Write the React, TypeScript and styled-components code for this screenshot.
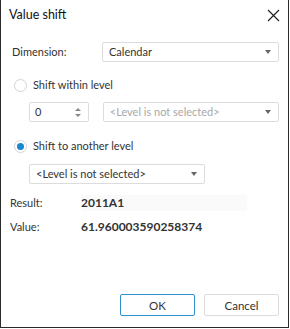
import React, { useState } from 'react';
import styled, { createGlobalStyle } from 'styled-components';

const GlobalStyle = createGlobalStyle`
  html, body {
    margin: 0;
    padding: 0;
    background: #fff;
  }
  body {
    font-family: Lato, "Noto Sans", Arial, sans-serif;
    font-size: 11px;
    line-height: 16px;
    color: #333;
  }
`;

const Dialog = styled.div`
  box-sizing: border-box;
  width: 289px;
  height: 328px;
  border: 1px solid #2b2b2b;
  border-top: none;
  display: flex;
  flex-direction: column;
  background: #fff;
`;

const TitleBar = styled.div`
  display: flex;
  align-items: center;
  justify-content: space-between;
  height: 30px;
  padding: 0 7px 0 8px;
`;

const Title = styled.div`
  font-size: 12.5px;
  color: #111;
`;

const CloseButton = styled.button`
  border: none;
  background: none;
  padding: 0;
  width: 16px;
  height: 16px;
  display: flex;
  align-items: center;
  justify-content: center;
`;

const Body = styled.div`
  flex: 1;
  display: flex;
  flex-direction: column;
  padding: 12px 9px 0 9px;
`;

const Row = styled.div<{ indent?: number; mt?: number }>`
  display: flex;
  align-items: center;
  margin-left: ${p => p.indent || 0}px;
  margin-top: ${p => p.mt || 0}px;
`;

const Label = styled.div<{ width: number; inset?: number }>`
  width: ${p => p.width}px;
  padding-left: ${p => p.inset || 0}px;
  box-sizing: border-box;
  flex-shrink: 0;
`;

const Combo = styled.div<{ width: number; disabled?: boolean }>`
  box-sizing: border-box;
  width: ${p => p.width}px;
  height: 20px;
  border: 1px solid #dcdcdc;
  border-radius: 2px;
  display: flex;
  align-items: center;
  justify-content: space-between;
  padding: 0 7px 0 6px;
  color: ${p => (p.disabled ? '#a8a8a8' : '#333')};
`;

const Arrow = styled.span`
  width: 0;
  height: 0;
  border-left: 3.5px solid transparent;
  border-right: 3.5px solid transparent;
  border-top: 4px solid #666;
`;

const Radio = styled.label`
  display: flex;
  align-items: center;
  gap: 6px;
  cursor: pointer;
`;

const RadioCircle = styled.span<{ checked: boolean }>`
  box-sizing: border-box;
  width: 13px;
  height: 13px;
  border-radius: 50%;
  border: 1px solid #d4d4d4;
  display: flex;
  align-items: center;
  justify-content: center;
  &::after {
    content: '';
    width: 7px;
    height: 7px;
    border-radius: 50%;
    background: ${p => (p.checked ? '#1a86d0' : 'transparent')};
  }
`;

const Spinner = styled.div`
  box-sizing: border-box;
  width: 60px;
  height: 20px;
  border: 1px solid #dcdcdc;
  border-radius: 2px;
  display: flex;
  align-items: center;
  justify-content: space-between;
  padding: 0 7px 0 5px;
  margin-right: 14px;
`;

const SpinArrows = styled.div`
  display: flex;
  flex-direction: column;
  gap: 3px;
`;

const SpinArrow = styled.span<{ up?: boolean }>`
  width: 0;
  height: 0;
  border-left: 3px solid transparent;
  border-right: 3px solid transparent;
  ${p => (p.up ? 'border-bottom: 3px solid #888;' : 'border-top: 3px solid #888;')}
`;

const InfoValue = styled.div<{ shaded?: boolean }>`
  font-weight: bold;
  font-size: 12px;
  color: #333;
  width: 166px;
  height: 16px;
  background: ${p => (p.shaded ? '#fafafa' : 'transparent')};
`;

const Footer = styled.div`
  display: flex;
  justify-content: flex-end;
  gap: 9px;
  padding: 0 9px 11px 0;
`;

const Button = styled.button<{ primary?: boolean }>`
  box-sizing: border-box;
  width: 75px;
  height: 22px;
  border: 1px solid ${p => (p.primary ? '#2e8fd3' : '#dcdcdc')};
  border-radius: 2px;
  background: #fff;
  font-family: inherit;
  font-size: 11.5px;
  color: #333;
  padding: 0;
`;

export default function App() {
  const [mode, setMode] = useState<'within' | 'another'>('another');

  return (
    <>
      <GlobalStyle />
      <Dialog>
        <TitleBar>
          <Title>Value shift</Title>
          <CloseButton>
            <svg width="13" height="13" viewBox="0 0 13 13">
              <path d="M1 1L12 12M12 1L1 12" stroke="#222" strokeWidth="1.2" />
            </svg>
          </CloseButton>
        </TitleBar>
        <Body>
          <Row>
            <Label width={92} inset={2}>Dimension:</Label>
            <Combo width={177}>
              <span>Calendar</span>
              <Arrow />
            </Combo>
          </Row>

          <Row indent={4} mt={15}>
            <Radio onClick={() => setMode('within')}>
              <RadioCircle checked={mode === 'within'} />
              <span>Shift within level</span>
            </Radio>
          </Row>
          <Row indent={19} mt={9}>
            <Spinner>
              <span>0</span>
              <SpinArrows>
                <SpinArrow up />
                <SpinArrow />
              </SpinArrows>
            </Spinner>
            <Combo width={177} disabled>
              <span>&lt;Level is not selected&gt;</span>
              <Arrow />
            </Combo>
          </Row>

          <Row indent={4} mt={16}>
            <Radio onClick={() => setMode('another')}>
              <RadioCircle checked={mode === 'another'} />
              <span>Shift to another level</span>
            </Radio>
          </Row>
          <Row indent={19} mt={10}>
            <Combo width={176}>
              <span>&lt;Level is not selected&gt;</span>
              <Arrow />
            </Combo>
          </Row>

          <Row mt={11}>
            <Label width={71}>Result:</Label>
            <InfoValue shaded>2011A1</InfoValue>
          </Row>
          <Row mt={8}>
            <Label width={71}>Value:</Label>
            <InfoValue>61.960003590258374</InfoValue>
          </Row>
        </Body>
        <Footer>
          <Button primary>OK</Button>
          <Button>Cancel</Button>
        </Footer>
      </Dialog>
    </>
  );
}
